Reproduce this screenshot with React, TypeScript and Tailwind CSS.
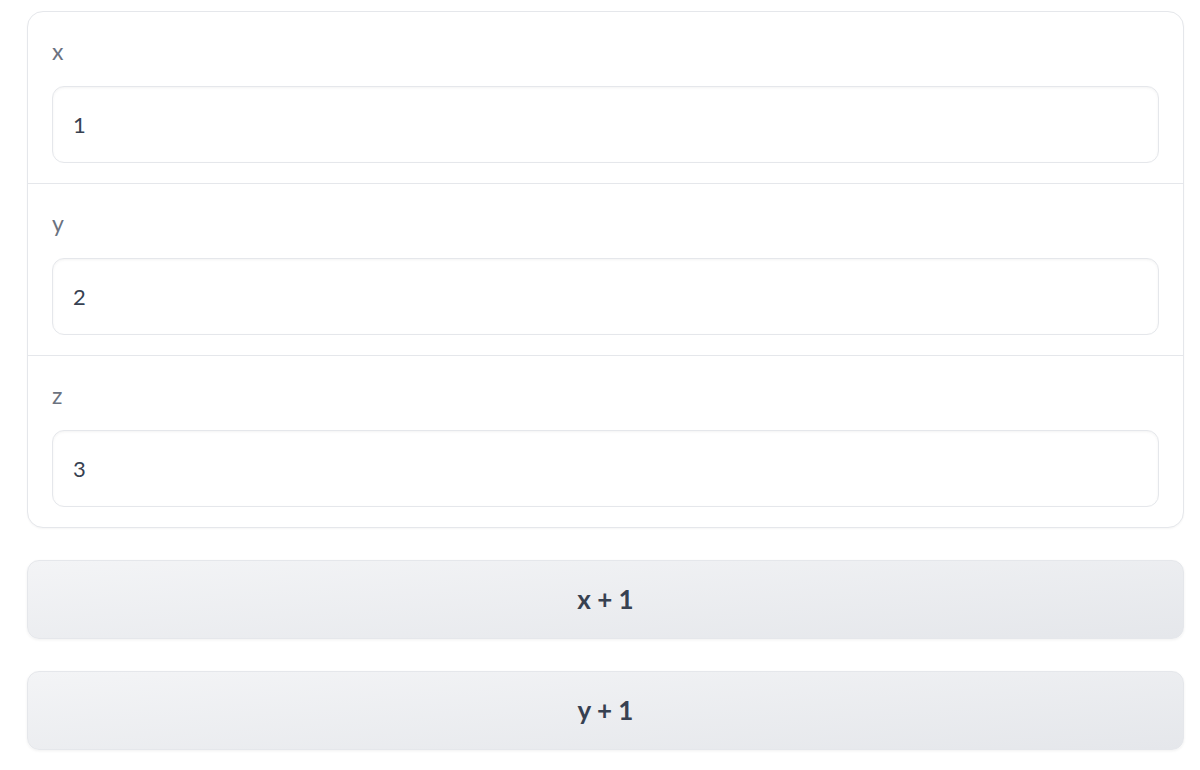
import React from "react";

const fields = [
  { label: "x", value: "1" },
  { label: "y", value: "2" },
  { label: "z", value: "3" },
];

export default function App() {
  return (
    <div
      className="min-h-[770px] w-[1200px] bg-white pt-[11px] pl-[27px] pr-[16px]"
      style={{ fontFamily: "Lato, 'Noto Sans', sans-serif" }}
    >
      {/* Inputs card */}
      <div className="rounded-2xl border border-[#e5e7eb] bg-white shadow-[0_1px_2px_rgba(0,0,0,0.04)] divide-y divide-[#e5e7eb]">
        {fields.map((f) => (
          <div key={f.label} className="px-6 pt-6 pb-5">
            <div className="mb-5 text-[23px] leading-[30px] text-[#6b7280]">
              {f.label}
            </div>
            <div className="flex h-[77px] items-center rounded-xl border border-[#e5e7eb] bg-white px-5 text-[22px] text-[#374151] shadow-[inset_0_1px_3px_rgba(0,0,0,0.05)]">
              {f.value}
            </div>
          </div>
        ))}
      </div>

      {/* Buttons */}
      <div className="mt-8 flex flex-col gap-8">
        {["x + 1", "y + 1"].map((b) => (
          <button
            key={b}
            className="flex h-[79px] w-full items-center justify-center rounded-xl border border-[#e5e7eb] bg-gradient-to-br from-[#f3f4f6] to-[#e5e7eb] text-[26px] font-bold text-[#374151] shadow-[0_1px_3px_rgba(0,0,0,0.06)]"
          >
            {b}
          </button>
        ))}
      </div>
    </div>
  );
}
